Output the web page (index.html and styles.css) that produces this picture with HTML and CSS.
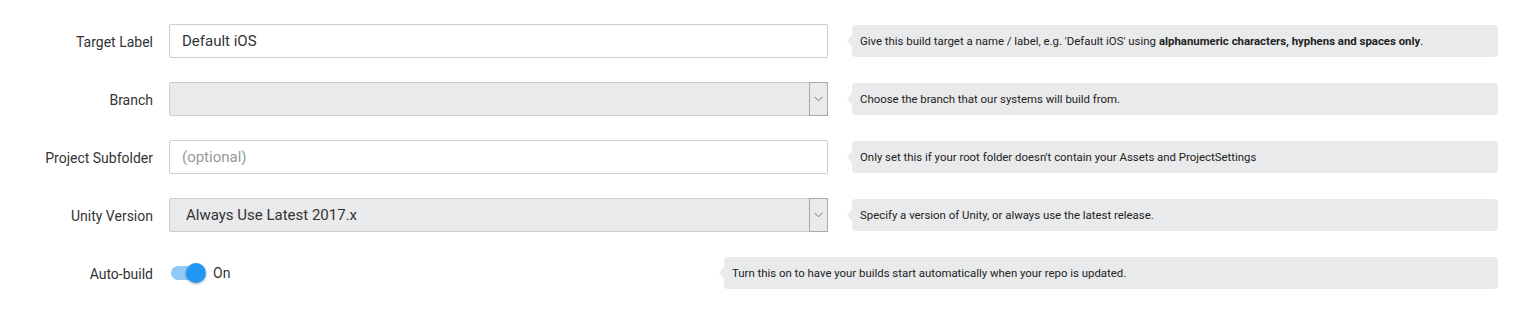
FILE: index.html
```html
<!DOCTYPE html>
<html lang="en">
<head>
    <meta charset="UTF-8">
    <title>Build Target</title>
    <link rel="stylesheet" href="styles.css">
</head>
<body>
    <form class="target-form">
        <div class="form-row">
            <label class="form-label">Target Label</label>
            <div class="form-control">
                <input class="text-input" type="text" value="Default iOS">
            </div>
            <div class="help">Give this build target a name / label, e.g. 'Default iOS' using <b>alphanumeric characters, hyphens and spaces only</b>.</div>
        </div>

        <div class="form-row">
            <label class="form-label">Branch</label>
            <div class="form-control">
                <div class="select">
                    <span class="select-value"></span>
                    <span class="select-arrow">
                        <svg width="9" height="6" viewBox="0 0 9 6"><path d="M0.5 0.8 L4.5 4.8 L8.5 0.8" fill="none" stroke="#777" stroke-width="1"/></svg>
                    </span>
                </div>
            </div>
            <div class="help">Choose the branch that our systems will build from.</div>
        </div>

        <div class="form-row">
            <label class="form-label">Project Subfolder</label>
            <div class="form-control">
                <input class="text-input" type="text" placeholder="(optional)">
            </div>
            <div class="help">Only set this if your root folder doesn't contain your Assets and ProjectSettings</div>
        </div>

        <div class="form-row">
            <label class="form-label">Unity Version</label>
            <div class="form-control">
                <div class="select">
                    <span class="select-value">Always Use Latest 2017.x</span>
                    <span class="select-arrow">
                        <svg width="9" height="6" viewBox="0 0 9 6"><path d="M0.5 0.8 L4.5 4.8 L8.5 0.8" fill="none" stroke="#777" stroke-width="1"/></svg>
                    </span>
                </div>
            </div>
            <div class="help">Specify a version of Unity, or always use the latest release.</div>
        </div>

        <div class="form-row">
            <label class="form-label">Auto-build</label>
            <div class="form-control toggle-control">
                <span class="toggle"><span class="toggle-knob"></span></span>
                <span class="toggle-text">On</span>
            </div>
            <div class="help">Turn this on to have your builds start automatically when your repo is updated.</div>
        </div>
    </form>
</body>
</html>
```

FILE: styles.css
```css
body {
    margin: 0;
    background: #fff;
    font-family: Roboto, "Liberation Sans", sans-serif;
    color: #333;
}

.target-form {
    display: flex;
    flex-direction: column;
    gap: 24px;
    padding: 24px 36px 0 0;
}

.form-row {
    display: flex;
    align-items: center;
    min-height: 34px;
}

.form-label {
    width: 153px;
    padding-right: 16px;
    text-align: right;
    font-size: 14px;
    color: #333;
    padding-top: 2px;
}

.form-control {
    width: 659px;
    flex-shrink: 0;
}

.text-input {
    box-sizing: border-box;
    width: 100%;
    height: 34px;
    border: 1px solid #ccc;
    border-radius: 2px;
    padding: 0 12px;
    font-family: Roboto, sans-serif;
    font-size: 15px;
    color: #333;
    outline: none;
}

.text-input::placeholder {
    color: #999;
}

.select {
    box-sizing: border-box;
    display: flex;
    height: 34px;
    background: #e9eaec;
    border: 1px solid #ccc;
    border-radius: 2px;
}

.select-value {
    flex: 1;
    display: flex;
    align-items: center;
    padding-left: 16px;
    font-size: 15px;
    color: #333;
}

.select-arrow {
    width: 17px;
    display: flex;
    align-items: center;
    justify-content: center;
    border: 1px solid #aaa;
    margin: -1px -1px -1px 0;
}

.toggle-control {
    width: 531px;
    display: flex;
    align-items: center;
    gap: 8px;
}

.toggle {
    position: relative;
    display: block;
    width: 28px;
    height: 14px;
    margin-left: 2px;
    border-radius: 7px;
    background: #90caf9;
}

.toggle-knob {
    position: absolute;
    top: -3px;
    right: -7px;
    width: 20px;
    height: 20px;
    border-radius: 50%;
    background: #2196f3;
    box-shadow: 0 1px 3px rgba(0,0,0,0.35);
}

.toggle-text {
    margin-left: 6px;
    font-size: 14px;
}

.help {
    position: relative;
    flex: 1;
    margin-left: 24px;
    height: 32px;
    display: flex;
    align-items: center;
    padding: 0 8px;
    background: #e9eaeb;
    border-radius: 4px;
    font-size: 11.4px;
    color: #222;
}

.help::before {
    content: '';
    position: absolute;
    left: -5px;
    top: 10px;
    border-top: 6px solid transparent;
    border-bottom: 6px solid transparent;
    border-right: 5px solid #e9eaeb;
}

.help b {
    margin-left: 3px;
}
```
